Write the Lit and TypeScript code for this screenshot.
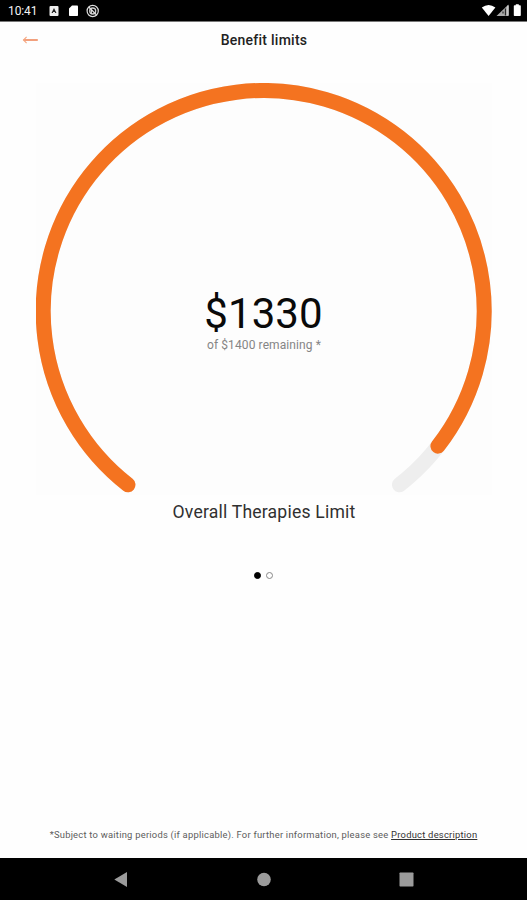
import { LitElement, html, css, svg } from "lit";
import { customElement, property } from "lit/decorators.js";

const CX = 227.7;
const CY = 228;
const R = 220.5;

function arc(from: number, to: number): string {
  const at = (deg: number) => {
    const a = (deg * Math.PI) / 180;
    return `${(CX + R * Math.cos(a)).toFixed(2)} ${(CY + R * Math.sin(a)).toFixed(2)}`;
  };
  return `M${at(from)}A${R} ${R} 0 ${to - from > 180 ? 1 : 0} 1 ${at(to)}`;
}

@customElement("status-bar")
export class StatusBar extends LitElement {
  static styles = css`
    :host { display: flex; height: 21px; background: #000; color: #f4f4f4; border-bottom: 1px solid #777; box-sizing: content-box; }
    .time { width: 40px; padding-left: 8px; box-sizing: content-box; font: 400 12px/22px Roboto, sans-serif; letter-spacing: -0.1px; }
    svg { display: block; flex: none; }
    .left { margin-left: -1px; }
    .right { margin-left: auto; }
  `;
  render() {
    return html`
      <div class="time">10:41</div>
      <svg class="left" width="56" height="21" viewBox="47 0 56 21">
        <rect x="49.5" y="6" width="9" height="10" rx="1" fill="#eee" />
        <path d="M51.5 13 54 8l2.5 5h-1.3l-.4-1h-1.6l-.4 1z" fill="#222" />
        <path d="M72 5.5h5.2a.8.8 0 0 1 .8.8v9a.8.8 0 0 1-.8.8h-7.4a.8.8 0 0 1-.8-.8V8.5z" fill="#fff" />
        <circle cx="92.7" cy="11" r="5.6" fill="none" stroke="#ddd" stroke-width="1.2" />
        <circle cx="92.7" cy="11" r="3" fill="none" stroke="#ccc" stroke-width="1.3" />
        <path d="M88.8 7 96.6 15M91.3 13.8V9.7" stroke="#ddd" stroke-width="1.2" />
      </svg>
      <svg class="right" width="47" height="21" viewBox="480 0 47 21">
        <path d="M481.8 7.6q6.8-5.4 13.6 0L488.6 16z" fill="#fff" />
        <path d="M508.5 4.5V16H496.5z" fill="#aaa" />
        <path d="M505.4 8.5v7M503 13.5v-2" stroke="#222" stroke-width="1.1" />
        <path d="M508 5.5v10" stroke="#ddd" stroke-width="1.2" />
        <path d="M515.8 4.2h3v1h1.2q.8 0 .8.8v9.3q0 .8-.8.8h-5.4q-.8 0-.8-.8V6q0-.8.8-.8h1.2z" fill="#fff" />
      </svg>
    `;
  }
}

@customElement("limit-gauge")
export class LimitGauge extends LitElement {
  @property({ type: Number }) remaining = 0;
  @property({ type: Number }) total = 1;

  static styles = css`
    :host { display: grid; width: 456px; height: 412px; background: #fdfdfd; }
    svg, .reading { grid-area: 1 / 1; }
    svg { display: block; }
    .track, .value { fill: none; stroke-width: 15; stroke-linecap: round; }
    .track { stroke: #eee; }
    .value { stroke: #f47320; }
    .reading { text-align: center; padding-top: 206px; color: #0a0a0a; }
    .amount { font: 400 42px/50px Roboto, sans-serif; letter-spacing: 0.1px; }
    .caption { margin-top: -1px; padding-left: 1px; font: 400 12px/14px Roboto, sans-serif; letter-spacing: 0.1px; color: #858585; }
  `;
  render() {
    const start = 128;
    const sweep = 284;
    const end = start + (sweep * this.remaining) / this.total;
    return html`
      <svg width="456" height="412" viewBox="0 0 456 412">
        ${svg`<path class="track" d=${arc(start, start + sweep)} /><path class="value" d=${arc(start, end)} />`}
      </svg>
      <div class="reading">
        <div class="amount">$${this.remaining}</div>
        <div class="caption">of $${this.total} remaining *</div>
      </div>
    `;
  }
}

@customElement("app-root")
export class AppRoot extends LitElement {
  static styles = css`
    :host { display: flex; flex-direction: column; height: 900px; background: #fefefe; font-family: Roboto, sans-serif; color: #222; }
    .header { display: grid; grid-template-columns: 60px 1fr 60px; align-items: center; height: 36px; }
    .back { display: block; margin-left: 22px; }
    .title { padding: 0 0 1px 1px; font: 500 14px/20px Roboto, sans-serif; letter-spacing: 0.25px; text-align: center; }
    .main { flex: 1; display: flex; flex-direction: column; align-items: center; padding-top: 25px; }
    .name { margin: 6px 0 0 1px; font-size: 17.6px; line-height: 22px; letter-spacing: 0.19px; color: #303030; }
    .dots { display: flex; gap: 5px; margin: 49px 1px 0 0; }
    .dot { box-sizing: border-box; width: 7px; height: 7px; border-radius: 50%; border: 1px solid #888; }
    .current { background: #000; border-color: #000; }
    .note { margin: auto 0 16px; font-size: 9.4px; line-height: 14px; letter-spacing: 0.24px; color: #5c5c5c; white-space: nowrap; }
    .link { color: #333; text-decoration: underline; }
    .nav { height: 42px; background: #000; }
    .nav svg { display: block; }
  `;
  render() {
    return html`
      <status-bar></status-bar>
      <div class="header">
        <svg class="back" width="18" height="10" viewBox="0 0 18 10" fill="none">
          <path d="M1.5 5H15.8" stroke="#ee8152" stroke-width="1.5" />
          <path d="M4.6 1.9 1.5 5 4.6 8.1" stroke="#f5a780" stroke-width="1.1" />
        </svg>
        <div class="title">Benefit limits</div>
      </div>
      <div class="main">
        <limit-gauge .remaining=${1330} .total=${1400}></limit-gauge>
        <div class="name">Overall Therapies Limit</div>
        <div class="dots"><span class="dot current"></span><span class="dot"></span></div>
        <div class="note">*Subject to waiting periods (if applicable). For further information, please see <span class="link">Product description</span></div>
      </div>
      <div class="nav">
        <svg width="527" height="42" viewBox="0 858 527 42" fill="#9b9b9b">
          <path d="M114.3 879.5 127 872v15z" />
          <circle cx="264" cy="879.5" r="6.8" />
          <rect x="399.5" y="872.5" width="14" height="14" rx=".7" />
        </svg>
      </div>
    `;
  }
}
